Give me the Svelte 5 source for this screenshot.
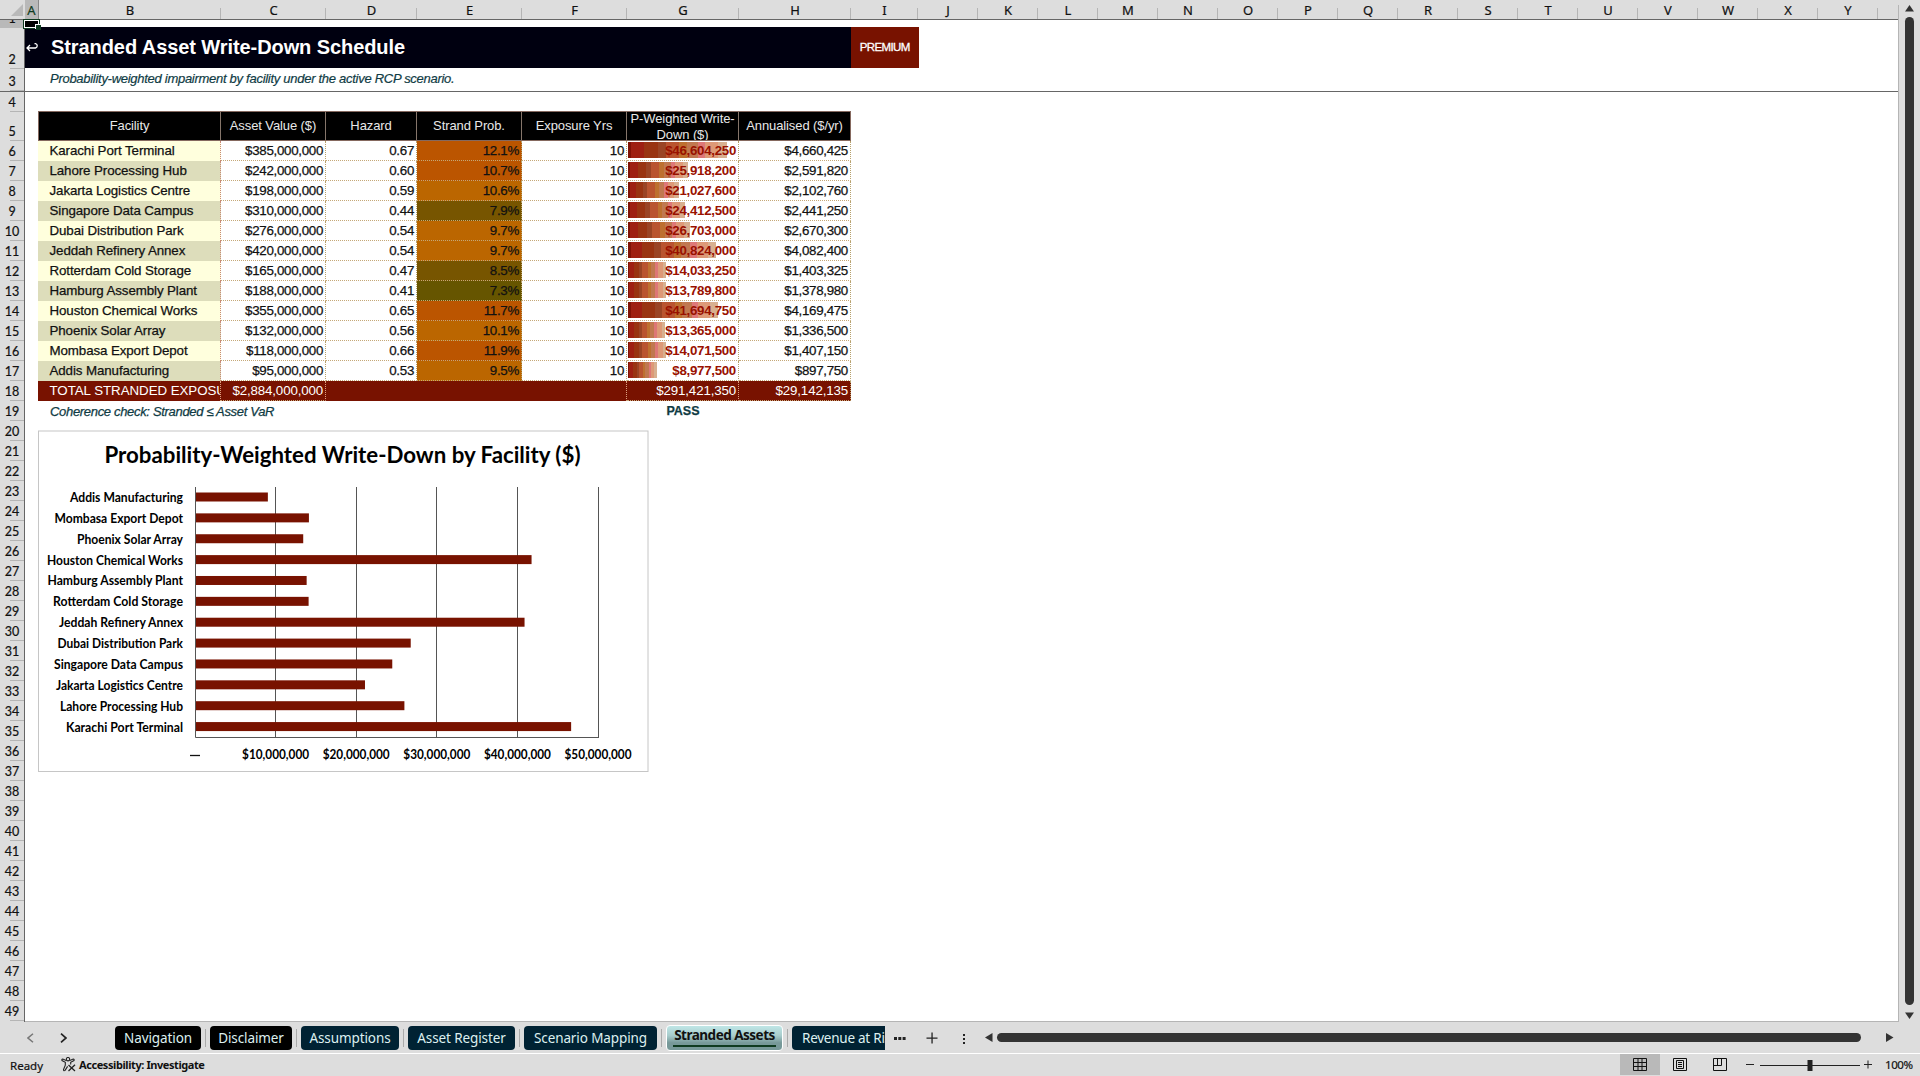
<script lang="ts">
	interface Facility {
		name: string;
		value: string;
		hazard: string;
		prob: string;
		heat: string;
		amount: number;
		annual: string;
	}

	const columns = [
		{ label: 'A', width: 14 },
		{ label: 'B', width: 182 },
		{ label: 'C', width: 105 },
		{ label: 'D', width: 91 },
		{ label: 'E', width: 105 },
		{ label: 'F', width: 105 },
		{ label: 'G', width: 112 },
		{ label: 'H', width: 112 },
		{ label: 'I', width: 67 },
		...'JKLMNOPQRSTUVWXY'.split('').map((label) => ({ label, width: 60 }))
	];

	const firstRows = [8, 41, 23, 20, 29];
	const rowHeights = [...firstRows, ...Array(44).fill(20)];

	const facilities: Facility[] = [
		{ name: 'Karachi Port Terminal', value: '$385,000,000', hazard: '0.67', prob: '12.1%', heat: 'high', amount: 46604250, annual: '$4,660,425' },
		{ name: 'Lahore Processing Hub', value: '$242,000,000', hazard: '0.60', prob: '10.7%', heat: 'high', amount: 25918200, annual: '$2,591,820' },
		{ name: 'Jakarta Logistics Centre', value: '$198,000,000', hazard: '0.59', prob: '10.6%', heat: 'mid', amount: 21027600, annual: '$2,102,760' },
		{ name: 'Singapore Data Campus', value: '$310,000,000', hazard: '0.44', prob: '7.9%', heat: 'low', amount: 24412500, annual: '$2,441,250' },
		{ name: 'Dubai Distribution Park', value: '$276,000,000', hazard: '0.54', prob: '9.7%', heat: 'mid', amount: 26703000, annual: '$2,670,300' },
		{ name: 'Jeddah Refinery Annex', value: '$420,000,000', hazard: '0.54', prob: '9.7%', heat: 'mid', amount: 40824000, annual: '$4,082,400' },
		{ name: 'Rotterdam Cold Storage', value: '$165,000,000', hazard: '0.47', prob: '8.5%', heat: 'low', amount: 14033250, annual: '$1,403,325' },
		{ name: 'Hamburg Assembly Plant', value: '$188,000,000', hazard: '0.41', prob: '7.3%', heat: 'min', amount: 13789800, annual: '$1,378,980' },
		{ name: 'Houston Chemical Works', value: '$355,000,000', hazard: '0.65', prob: '11.7%', heat: 'high', amount: 41694750, annual: '$4,169,475' },
		{ name: 'Phoenix Solar Array', value: '$132,000,000', hazard: '0.56', prob: '10.1%', heat: 'mid', amount: 13365000, annual: '$1,336,500' },
		{ name: 'Mombasa Export Depot', value: '$118,000,000', hazard: '0.66', prob: '11.9%', heat: 'high', amount: 14071500, annual: '$1,407,150' },
		{ name: 'Addis Manufacturing', value: '$95,000,000', hazard: '0.53', prob: '9.5%', heat: 'mid', amount: 8977500, annual: '$897,750' }
	];

	// label widths in the chart, same order as the facilities
	const labelWidths = [117, 123, 127, 129, 125.5, 124, 130, 135.5, 136, 106, 128.5, 113];

	const chartBars = facilities
		.map((f, i) => ({ name: f.name, amount: f.amount, labelWidth: labelWidths[i] }))
		.reverse();

	const ticks = ['$10,000,000', '$20,000,000', '$30,000,000', '$40,000,000', '$50,000,000'];
	const tickStep = 80.6;

	const money = (n: number) => '$' + n.toLocaleString('en-US');
	// shortest bar still keeps a stub, like Excel does
	const dataBar = (n: number) => 11.9 + (n / 1000000) * 1.863;

	const tabs = [
		{ label: 'Navigation', width: 86, kind: 'black' },
		{ label: 'Disclaimer', width: 82, kind: 'black' },
		{ label: 'Assumptions', width: 98, kind: 'navy' },
		{ label: 'Asset Register', width: 107, kind: 'navy' },
		{ label: 'Scenario Mapping', width: 133, kind: 'navy' },
		{ label: 'Stranded Assets', width: 117, kind: 'active' },
		{ label: 'Revenue at Risk', width: 93, kind: 'navy cut' }
	];
</script>

<div class="app">
	<div class="col-heads">
		<div class="corner"><svg width="12" height="12" viewBox="0 0 12 12"><path d="M12 0V12H0Z" fill="#b9b9b9" /></svg></div>
		{#each columns as col, i}
			<div class="col-head" class:selected={i === 0} style="width: {col.width}px">{col.label}</div>
		{/each}
	</div>

	<div class="body">
		<div class="row-heads">
			{#each rowHeights as height, i}
				<div class="row-head" class:selected={i === 0} class:frozen={i === 2} style="height: {height}px">
					<span>{i + 1}</span>
				</div>
			{/each}
		</div>

		<main class="sheet">
			<div class="row-one"><div class="cursor"><i></i></div></div>
			<div class="banner">
				<div class="back">
					<svg width="13" height="10" viewBox="0 0 13 10" fill="none" stroke="#fff" stroke-width="1.3">
						<path d="M4 3L1 6L4 9M1 6H9.5A2.2 2.2 0 0 0 9.5 1.700H8.500" />
					</svg>
				</div>
				<h1>Stranded Asset Write-Down Schedule</h1>
				<div class="premium">PREMIUM</div>
			</div>
			<div class="subtitle">Probability-weighted impairment by facility under the active RCP scenario.</div>

			<div class="table">
				<div class="row head">
					<div>Facility</div>
					<div>Asset Value ($)</div>
					<div>Hazard</div>
					<div>Strand Prob.</div>
					<div>Exposure Yrs</div>
					<div class="wrap">P-Weighted Write-<br />Down ($)</div>
					<div>Annualised ($/yr)</div>
				</div>
				{#each facilities as f}
					<div class="row data">
						<div class="name">{f.name}</div>
						<div class="num">{f.value}</div>
						<div class="num">{f.hazard}</div>
						<div class="num {f.heat}">{f.prob}</div>
						<div class="num">10</div>
						<div class="num loss">
							<span class="bar" style="width: {dataBar(f.amount)}px"></span>
							<b>{money(f.amount)}</b>
						</div>
						<div class="num">{f.annual}</div>
					</div>
				{/each}
				<div class="row total">
					<div class="name">TOTAL STRANDED EXPOSURE</div>
					<div class="num edge">$2,884,000,000</div>
					<div></div>
					<div></div>
					<div></div>
					<div class="num edge">$291,421,350</div>
					<div class="num">$29,142,135</div>
				</div>
				<div class="row check">
					<div class="note">Coherence check: Stranded ≤ Asset VaR</div>
					<div class="pass">PASS</div>
				</div>
			</div>

			<svg class="chart" width="611" height="342" viewBox="38 430 611 342">
				<rect x="38.5" y="431" width="609.500" height="340.500" fill="#fff" stroke="#c6c6c6" />
				<text class="chart-title" x="104.500" y="463" textLength="476" lengthAdjust="spacingAndGlyphs">Probability-Weighted Write-Down by Facility ($)</text>
				{#each ticks as tick, i}
					<path d="M{195.5 + Math.floor(tickStep * (i + 1))} 487V737" stroke="#555" />
					<text
						class="chart-label"
						x={195.5 + tickStep * (i + 1) - 34}
						y="759"
						textLength="67"
						lengthAdjust="spacingAndGlyphs">{tick}</text
					>
				{/each}
				<path d="M190 755.5H200" stroke="#111" stroke-width="1.3" />
				{#each chartBars as bar, i}
					<text
						class="chart-label"
						x={183 - bar.labelWidth}
						y={502 + i * 20.87}
						textLength={bar.labelWidth}
						lengthAdjust="spacingAndGlyphs">{bar.name}</text
					>
					<rect x="195.500" y={492.5 + i * 20.87} width={(bar.amount / 10000000) * tickStep} height="9" fill="#781200" />
				{/each}
				<path d="M195.5 487V737.5H599" fill="none" stroke="#555" />
			</svg>
		</main>

		<div class="v-scroll">
			<svg width="9" height="7" viewBox="0 0 9 7"><path d="M4.5 0L9 6.5H0Z" fill="#333" /></svg>
			<div class="v-thumb"></div>
			<svg width="9" height="7" viewBox="0 0 9 7"><path d="M0 0.5H9L4.5 7Z" fill="#333" /></svg>
		</div>
	</div>

	<div class="tab-bar">
		<div class="tab-nav">
			<svg width="7" height="10" viewBox="0 0 7 10" fill="none" stroke="#777" stroke-width="1.5"><path d="M6 0.7L1 5L6 9.3" /></svg>
			<svg width="7" height="10" viewBox="0 0 7 10" fill="none" stroke="#222" stroke-width="1.7"><path d="M1 0.7L6 5L1 9.3" /></svg>
		</div>
		{#each tabs as tab, i}
			{#if i > 0}<span class="sep"></span>{/if}
			<div class="tab {tab.kind}" style="width: {tab.width}px"><span>{tab.label}</span></div>
		{/each}
		<svg class="tools" width="80" height="14" viewBox="0 0 80 14">
			<g fill="#222">
				<rect x="0" y="6" width="3" height="3" /><rect x="4.3" y="6" width="3" height="3" /><rect x="8.6" y="6" width="3" height="3" />
				<path d="M37.4 1.5h1.3v11h-1.3zM32.5 6.4h11v1.3h-11z" />
				<rect x="69" y="3" width="2" height="2" /><rect x="69" y="7" width="2" height="2" /><rect x="69" y="11" width="2" height="2" />
			</g>
		</svg>
		<svg class="h-left" width="8" height="9" viewBox="0 0 8 9"><path d="M7.5 0V9L0 4.5Z" fill="#333" /></svg>
		<div class="h-thumb"></div>
		<svg class="h-right" width="8" height="9" viewBox="0 0 8 9"><path d="M0 0V9L7.5 4.5Z" fill="#333" /></svg>
	</div>

	<footer class="status">
		<span class="ready">Ready</span>
		<svg class="a11y" width="15" height="15" viewBox="0 0 15 15" fill="none" stroke="#222" stroke-width="1.1">
			<circle cx="7" cy="2.2" r="1.7" />
			<path d="M5.2 3.4L1.8 2.1Q0.4 2.3 1 3.6L4.3 5.3V8.2L2.5 12.6Q2.7 14.3 4.1 13.4L6.6 9.4M8.8 3.4L12.2 2.1Q13.6 2.3 13 3.6L9.7 5.3V7.5" />
			<path d="M7.5 8L14 14M14 7.7L7.5 14" stroke-width="1.3" />
		</svg>
		<span class="a11y-text">Accessibility: Investigate</span>
		<div class="views">
			<div class="view on">
				<svg width="14" height="14" viewBox="0 0 14 14" fill="none" stroke="#111"><path d="M0.500 0.500H13.500V12.500H0.500ZM5 1V13M9 1V13M1 4.500H13M1 8.500H13" /></svg>
			</div>
			<div class="view">
				<svg width="14" height="14" viewBox="0 0 14 14" fill="none" stroke="#111"><path d="M0.5 0.5H13.5V12.5H0.5ZM3.5 2.5H10.5V10.5H3.5ZM5 4.5H9M5 6.5H9M5 8.5H9" /></svg>
			</div>
			<div class="view">
				<svg width="14" height="14" viewBox="0 0 14 14" fill="none" stroke="#111"><path d="M0.5 0.5H13.5V12.5H0.5ZM0.5 7.5H8.5V1M4.5 1V7.5" /></svg>
			</div>
		</div>
		<svg class="zoom" width="128" height="14" viewBox="0 0 128 14" fill="#222">
			<path d="M0 6h8v1H0zM14 7h100v1H14zM118 6h8v1h-8zM121.500 2.500h1v8h-1z" />
			<rect x="61.500" y="2" width="5" height="11" />
		</svg>
		<span class="percent">100%</span>
	</footer>
</div>

<style>
	:global(body) {
		margin: 0;
		overflow: hidden;
		background: #ddd;
	}

	.app {
		width: 1920px;
		height: 1076px;
		display: flex;
		flex-direction: column;
		background: #ddd;
		color: #111;
		font-family: 'Liberation Sans', Arial, sans-serif;
		font-size: 13.33px;
	}

	.app :is(div, span) {
		box-sizing: border-box;
	}

	.col-heads {
		display: flex;
		width: 1898px;
		height: 20px;
		border-bottom: 1px solid #666;
		font: 13px/21px 'Noto Sans', sans-serif;
		text-align: center;
		-webkit-text-stroke: 0.2px;
	}

	.corner {
		width: 25px;
		padding: 4px 0 0 9px;
		line-height: 0;
	}

	.col-head {
		flex: none;
		background: linear-gradient(#b5b5b5, #b5b5b5) right bottom / 1px 11px no-repeat;
	}

	.col-head.selected {
		background: #b9b9b9;
		border-right: 1px solid #888;
		color: #0f3b20;
	}

	.body {
		display: flex;
		height: 1002px;
	}

	.row-heads {
		width: 25px;
		border-right: 1px solid #666;
		overflow: hidden;
		font: 12.5px/19px Lato, sans-serif;
		-webkit-text-stroke: 0.2px;
	}

	.row-head {
		display: flex;
		align-items: flex-end;
		justify-content: center;
		overflow: hidden;
		background: linear-gradient(#b5b5b5, #b5b5b5) right bottom / 14px 1px no-repeat;
	}

	.row-head.selected {
		background: #b9b9b9;
	}

	.row-head.frozen {
		border-bottom: 1px solid #666;
	}

	.sheet {
		width: 1873px;
		background: #fff;
		border-bottom: 1px solid #b5b5b5;
	}

	.row-one {
		height: 7px;
	}

	.cursor {
		position: relative;
		z-index: 2;
		top: -1px;
		width: 17px;
		height: 10px;
		margin-left: -2px;
		border: 1.5px solid #0f3b20;
		background: #000;
		box-shadow: inset 0 0 0 1px #fff;
	}

	.cursor i {
		position: absolute;
		right: -2px;
		bottom: -2px;
		width: 5px;
		height: 5px;
		background: #0f3b20;
		box-shadow: -1px -1px 0 #fff;
	}

	.banner {
		display: flex;
		align-items: center;
		width: 893.500px;
		height: 41px;
		background: #000010;
		color: #fff;
	}

	.back {
		width: 26px;
		padding-left: 1px;
	}

	h1 {
		flex: 1;
		margin: 0;
		font-size: 20px;
		letter-spacing: -0.08px;
	}

	.premium {
		width: 67.500px;
		height: 41px;
		background: #781200;
		font: 11.5px/41px 'Liberation Sans', sans-serif;
		text-align: center;
		letter-spacing: -0.6px;
		-webkit-text-stroke: 0.3px;
	}

	.subtitle {
		height: 24px;
		padding-left: 25px;
		border-bottom: 1px solid #666;
		color: #0f3b44;
		font-size: 13px;
		font-style: italic;
		line-height: 22px;
		letter-spacing: -0.28px;
		-webkit-text-stroke: 0.2px;
	}

	.table {
		width: 813px;
		margin: 19px 0 0 13px;
		-webkit-text-stroke: 0.25px;
	}

	.row {
		display: grid;
		grid-template-columns: 183px 105px 91px 105px 105px 112px 112px;
		height: 20px;
		line-height: 19px;
	}

	.row > div {
		overflow: hidden;
		white-space: nowrap;
	}

	.head {
		grid-template-columns: 181px 105px 91px 105px 105px 112px 112px;
		height: 30px;
		border: 1px solid #85695f;
		background: #000;
		color: #e8e8e8;
		font-size: 13px;
		line-height: 28px;
		text-align: center;
		letter-spacing: -0.1px;
		box-sizing: border-box;
		-webkit-text-stroke: 0;
	}

	.head > div + div {
		border-left: 1px solid #85756a;
	}

	.head .wrap {
		line-height: 16px;
		margin-top: -1px;
	}

	.name {
		padding-left: 11.5px;
		letter-spacing: -0.1px;
	}

	.data:nth-child(even) .name {
		background: #ffffdd;
	}

	.data:nth-child(odd) .name {
		background: #ddddbb;
	}

	.num {
		padding-right: 2px;
		border-right: 1px dotted #b7a06b;
		border-bottom: 1px dotted #c5a878;
		text-align: right;
		letter-spacing: -0.3px;
	}

	.data .name {
		border-right: 1px dotted #c88878;
	}

	.high {
		background: #bb5500;
	}

	.mid {
		background: #bb6600;
	}

	.low {
		background: #775500;
	}

	.min {
		background: #665500;
	}

	.loss {
		position: relative;
		color: #991100;
		-webkit-text-stroke: 0;
	}

	.bar {
		position: absolute;
		left: 1px;
		top: 1px;
		height: 16px;
		background: linear-gradient(
			90deg,
			#7f1206 3%,
			#9e2012 3% 16%,
			#993412 16% 30%,
			#9a4425 30% 38%,
			#b95430 38% 52%,
			#bd7030 52% 60%,
			#c07850 60% 71%,
			#dd7777 71% 78%,
			#dd9977 78% 91%,
			#d8b090 91%
		);
	}

	.loss b {
		position: relative;
	}

	.total {
		background: #781200;
		color: #fff;
		-webkit-text-stroke: 0;
	}

	.total .name {
		border-right: 1px dotted #dda080;
		letter-spacing: -0.05px;
	}

	.total .num {
		letter-spacing: -0.15px;
	}

	.total .edge {
		border-right-color: #dda080;
	}

	.total div:nth-child(5) {
		border-right: 1px dotted #dda080;
	}

	.check {
		grid-template-columns: 589px 112px;
		color: #0f3b44;
		line-height: 21px;
	}

	.note {
		padding-left: 12px;
		font-size: 13px;
		font-style: italic;
		letter-spacing: -0.32px;
	}

	.pass {
		font-size: 12.5px;
		font-weight: bold;
		text-align: center;
		letter-spacing: 0;
	}

	.chart {
		display: block;
		margin: 9px 0 0 13px;
	}

	.chart-title {
		font: bold 22px Lato, sans-serif;
	}

	.chart-label {
		font: bold 12.5px Lato, sans-serif;
	}

	.v-scroll {
		display: flex;
		flex: 1;
		flex-direction: column;
		align-items: center;
		margin-top: -15px;
		border-left: 1px solid #b5b5b5;
	}

	.v-thumb {
		width: 9px;
		height: 988px;
		margin: 5px 0 7px;
		border-radius: 5px;
		background: #333;
	}

	.tab-bar {
		display: flex;
		align-items: center;
		height: 32px;
		border-bottom: 1px solid #fff;
		font: 13.5px/24px 'Noto Sans', sans-serif;
	}

	.tab-nav {
		display: flex;
		gap: 26px;
		width: 115px;
		padding-left: 27px;
	}

	.tab {
		flex: none;
		height: 24px;
		border-radius: 4px;
		color: #ddf0f0;
		text-align: center;
		white-space: nowrap;
		letter-spacing: -0.1px;
	}

	.black {
		background: #000;
	}

	.navy {
		background: #002233;
	}

	.cut {
		padding-left: 10px;
		border-radius: 4px 0 0 4px;
		overflow: hidden;
		text-align: left;
		letter-spacing: -0.25px;
	}

	.active {
		height: 26px;
		border: 1px solid #fff;
		background: linear-gradient(#bfe6e6, #a8cccc 40%, #779999 70%);
		color: #111;
		font-weight: bold;
		line-height: 19px;
		letter-spacing: -0.5px;
		font-size: 13.5px;
	}

	.active span {
		display: block;
		margin: 0 6px;
		height: 21px;
		border-bottom: 2px solid #0f3b20;
	}

	.sep {
		flex: none;
		width: 1px;
		height: 18px;
		margin: 0 4px;
		background: #aaa;
	}

	.tools {
		flex: none;
		margin-left: 9px;
	}

	.h-left {
		flex: none;
		margin-left: 11px;
	}

	.h-thumb {
		width: 864px;
		height: 9px;
		margin: 0 25px 0 4px;
		border-radius: 5px;
		background: #333;
	}

	.status {
		display: flex;
		align-items: center;
		height: 21px;
		font: 11.5px/21px 'Noto Sans', sans-serif;
		-webkit-text-stroke: 0.2px;
	}

	.ready {
		flex: none;
		width: 61px;
		padding: 1px 0 0 10px;
	}

	.a11y-text {
		margin-left: 3px;
		font-weight: bold;
		font-size: 11px;
		letter-spacing: -0.42px;
		-webkit-text-stroke: 0;
	}

	.views {
		display: flex;
		margin-left: auto;
	}

	.view {
		display: flex;
		align-items: center;
		justify-content: center;
		width: 40px;
		height: 21px;
	}

	.view.on {
		background: #b9b9b9;
	}

	.zoom {
		flex: none;
		margin-left: 6px;
	}

	.percent {
		flex: none;
		width: 35px;
		margin-left: 11px;
		letter-spacing: -0.4px;
	}
</style>
